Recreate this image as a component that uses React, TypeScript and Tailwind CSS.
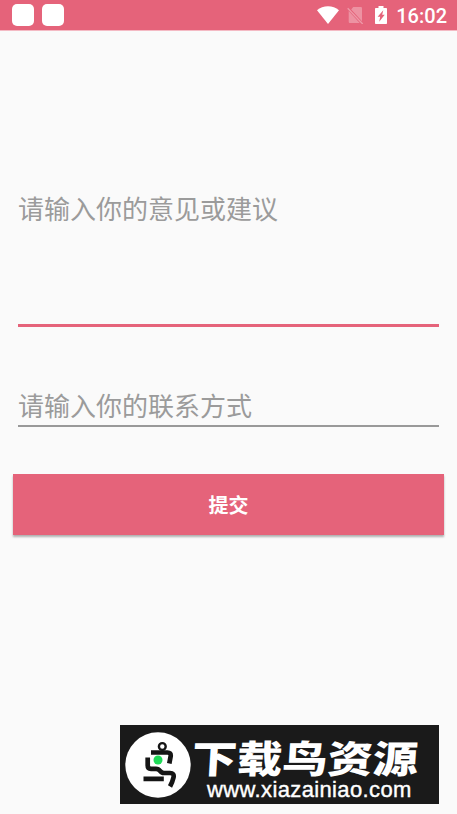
function WifiIcon() {
  return (
    <svg viewBox="0 0 22 18" className="h-[18px] w-[22px]" fill="#fff">
      <path d="M11 18 0 4.300C3 1.700 6.900.2 11 .2s8 1.500 11 4.100z" />
    </svg>
  );
}

function NoSimIcon() {
  return (
    <svg viewBox="0 0 17 18" className="h-[18px] w-[17px]">
      <path
        d="M6.200 1H13.700c.8 0 1.300.5 1.300 1.300V15.300L4.200 3.400zM1.700 5 12.700 17H3c-.8 0-1.300-.5-1.300-1.300z"
        fill="#fff"
        fillOpacity=".3"
      />
      <path d="M.7 2.300 15.700 18" stroke="#fff" strokeOpacity=".35" strokeWidth="1.300" />
    </svg>
  );
}

function BatteryIcon() {
  return (
    <svg viewBox="0 0 12 18" className="h-[18px] w-3">
      <path d="M3.500 0h5v2H11c.6 0 1 .4 1 1v14c0 .6-.4 1-1 1H1c-.6 0-1-.4-1-1V3c0-.6.4-1 1-1h2.500z" fill="#fff" />
      <path d="M8.300 4.200 2.600 10.800h2.600L4.200 15.700 9.700 8.700H7.200z" fill="#e5637a" />
    </svg>
  );
}

function StatusBar() {
  return (
    <header className="flex h-[30px] items-center justify-between bg-[#e5637a] pr-[10px] pl-3 shadow-[0_1px_0_#f4bac4]">
      <div className="flex gap-2">
        <span className="size-[22px] rounded-[5px] bg-white" />
        <span className="size-[22px] rounded-[5px] bg-white" />
      </div>
      <div className="flex items-center text-white">
        <WifiIcon />
        <span className="ml-[8px] flex">
          <NoSimIcon />
        </span>
        <span className="ml-[11px] flex">
          <BatteryIcon />
        </span>
        <span className="ml-[9px] pt-px font-[Roboto] text-[20px] leading-[30px] font-medium">16:02</span>
      </div>
    </header>
  );
}

function BirdLogo() {
  return (
    <svg viewBox="0 0 66 66" className="mt-px size-[66px] shrink-0" fill="none" stroke="#151515">
      <circle cx="33" cy="33" r="32.700" fill="#fff" stroke="none" />
      <circle cx="37.300" cy="14.500" r="3.400" strokeWidth="2.400" />
      <path
        d="M26 20.500H42.500Q46 20.500 45.700 24L44.300 31.500M22.700 25.500V33.500Q22.700 36.800 26 36.800H31C36 36.800 34 41 39 41H45Q49.500 41 48.500 45.500Q47.500 50 45 54.500M18.500 46.800H38.800"
        strokeWidth="4.700"
        strokeLinejoin="round"
      />
      <circle cx="33" cy="28" r="4.500" fill="#1fdb58" stroke="none" />
    </svg>
  );
}

function Banner() {
  return (
    <footer className="mt-auto mr-[18px] mb-[10px] ml-[120px] flex h-[79px] items-center overflow-hidden bg-[#1a1a1a] pl-[5px] text-white">
      <BirdLogo />
      <div className="ml-px flex h-full flex-col whitespace-nowrap">
        <span className="mt-[13px] h-[38px] origin-left scale-x-[1.190] -skew-x-3 font-['Noto_Sans_CJK_SC',sans-serif] text-[38px] leading-[38px] font-black">
          下载鸟资源
        </span>
        <span className="ml-[15px] font-['Liberation_Sans',sans-serif] text-[22px] leading-[27px] tracking-[0.370px] [-webkit-text-stroke:0.400px_white]">
          www.xiazainiao.com
        </span>
      </div>
    </footer>
  );
}

export default function App() {
  return (
    <div className="flex h-[814px] w-[457px] flex-col bg-[#fafafa] font-['Noto_Sans_CJK_SC',sans-serif]">
      <StatusBar />
      <form className="flex flex-col px-[13px]">
        <textarea
          placeholder="请输入你的意见或建议"
          className="mx-[5px] mt-[159px] block h-[138px] resize-none border-b-[3px] border-[#e5637a] text-[26px] leading-[38px] outline-none placeholder:text-[#9b9b9b]"
        />
        <input
          type="text"
          placeholder="请输入你的联系方式"
          className="mx-[5px] mt-[58px] block h-[42px] border-b-2 border-[#999] pb-px text-[26px] leading-[37px] outline-none placeholder:text-[#9b9b9b]"
        />
        <button
          type="button"
          className="mt-[47px] h-[61px] bg-[#e5637a] text-[20px] font-bold text-white shadow-[0_2px_2px_rgba(0,0,0,0.300)]"
        >
          提交
        </button>
      </form>
      <Banner />
    </div>
  );
}
